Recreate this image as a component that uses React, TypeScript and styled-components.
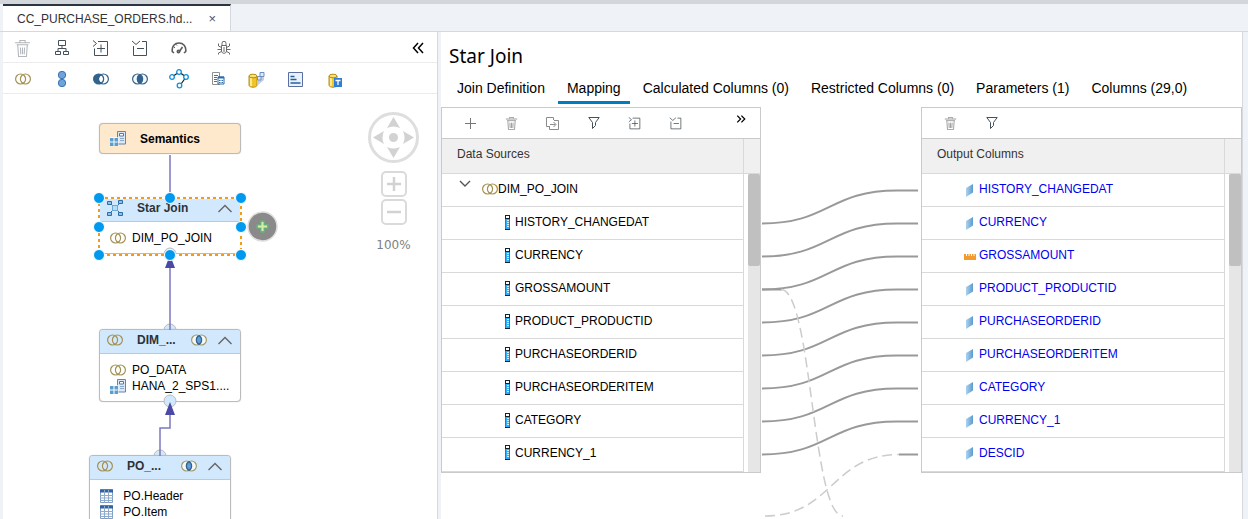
import React from "react";
import styled, { createGlobalStyle } from "styled-components";

const GlobalStyle = createGlobalStyle`
  *, *::before, *::after { box-sizing: border-box; }
  body {
    margin: 0;
    background: #eff3f8;
    color: #000;
    font: 12px/16px "Liberation Sans", Arial, sans-serif;
  }
  button {
    margin: 0;
    padding: 0;
    border: 0;
    background: none;
    color: inherit;
    font: inherit;
    cursor: pointer;
  }
  svg { display: block; flex: none; }
`;

/* ---------- Page frame ---------- */

const Page = styled.div`
  display: flex;
  flex-direction: column;
  height: 100vh;
  overflow: hidden;
  border-top: 4px solid #d3d7dc;
`;

const FileTabs = styled.div`
  display: flex;
  flex: none;
  height: 28px;
  padding-left: 3px;
  border-bottom: 1px solid #d5d8de;
`;

const FileTab = styled.div`
  display: flex;
  align-items: center;
  gap: 13px;
  padding: 0 11px 0 14px;
  border-top: 2px solid #2b3442;
  border-right: 1px solid #d5d8de;
  background: #fff;
  color: #333;
`;

const CloseButton = styled.button`
  width: 14px;
  height: 16px;
  color: #555;
  font-size: 13px;
`;

const Workspace = styled.div`
  display: flex;
  flex: 1;
  gap: 3px;
  min-height: 0;
  padding: 0 5px 0 3px;
`;

const ScenarioPane = styled.section`
  display: flex;
  flex: none;
  flex-direction: column;
  width: 435px;
  border-right: 1px solid #d5d8de;
  background: #fff;
`;

const DetailPane = styled.section`
  display: flex;
  flex: 1;
  flex-direction: column;
  min-width: 0;
  border-right: 1px solid #d5d8de;
  background: #fff;
`;

/* ---------- Toolbars ---------- */

const Toolbar = styled.div`
  display: flex;
  flex: none;
  height: 31px;
  padding-top: 2px;
  border-bottom: 1px solid #ececee;
`;

const ToolButton = styled.button<{ $before?: string; $wide?: boolean; $raised?: boolean }>`
  display: flex;
  align-items: center;
  justify-content: center;
  width: ${(p) => (p.$wide ? 41 : 39)}px;
  margin-left: ${(p) => p.$before ?? "0"};
  padding-bottom: ${(p) => (p.$raised ? 8 : 0)}px;
`;

/* ---------- Diagram ---------- */

const Canvas = styled.div`
  position: relative;
  flex: 1;
  overflow: hidden;
`;

const CanvasLayer = styled.svg`
  position: absolute;
  top: 0;
  left: 0;
  pointer-events: none;
`;

const Node = styled.article<{ $x: number; $y: number; $fill?: string }>`
  position: absolute;
  left: ${(p) => p.$x}px;
  top: ${(p) => p.$y}px;
  width: 142px;
  border: 1px solid #b9bbbd;
  border-radius: 4px;
  box-shadow: 0 0 1px #b9bbbd;
  background: ${(p) => p.$fill ?? "#fff"};
  overflow: hidden;
`;

const NodeHeader = styled.header<{ $plain?: boolean }>`
  display: flex;
  align-items: center;
  height: ${(p) => (p.$plain ? 29 : 24)}px;
  padding: ${(p) => (p.$plain ? "0 8px 0 10px" : "0 8px 3px 7px")};
  border-bottom: ${(p) => (p.$plain ? "0" : "1px solid #c3c8cc")};
  background: ${(p) => (p.$plain ? "transparent" : "#d2e8fc")};
`;

const NodeTitle = styled.h3<{ $dark?: boolean }>`
  flex: 1;
  margin: 0;
  padding-left: 14px;
  color: ${(p) => (p.$dark ? "#000" : "#2c3238")};
  font-size: 12px;
  line-height: 16px;
`;

const CollapseButton = styled.button`
  margin-left: 11px;
`;

const NodeInputs = styled.ul`
  margin: 0;
  padding: 8px 0 7px 10px;
  list-style: none;
`;

const NodeInput = styled.li`
  display: flex;
  align-items: center;
  gap: 6px;
  height: 16px;
`;

const AddButton = styled.button`
  position: absolute;
  left: 244px;
  top: 117px;
`;

const Navigator = styled.div`
  position: absolute;
  top: 18px;
  right: 18px;
  display: flex;
  flex-direction: column;
  align-items: center;
`;

const ZoomButtons = styled.div`
  display: flex;
  flex-direction: column;
  gap: 2px;
  margin: 8px 0 12px;
`;

const ZoomLevel = styled.span`
  color: #808080;
  font-family: "DejaVu Sans", Verdana, sans-serif;
`;

/* ---------- Detail pane ---------- */

const PaneTitle = styled.h1`
  margin: 0;
  padding: 11px 8px 0;
  font: 400 19px/26px "Noto Sans", "Segoe UI", sans-serif;
`;

const ViewTabs = styled.nav`
  display: flex;
  flex: none;
  gap: 4px;
  margin-bottom: 3px;
  padding: 4px 7px 0;
`;

const ViewTab = styled.button<{ $active?: boolean }>`
  height: 31px;
  padding: 2px 9px 0;
  border-bottom: 3px solid ${(p) => (p.$active ? "#007cc0" : "transparent")};
  font-size: 14px;
  line-height: 16px;
  white-space: nowrap;
`;

const MappingArea = styled.div`
  display: grid;
  grid-template-columns: minmax(0, 320fr) 160px minmax(0, 321fr);
  align-items: start;
  flex: 1;
  min-height: 0;
`;

const Panel = styled.section`
  border: 1px solid #c9cacb;
`;

const PanelToolbar = styled.div`
  display: flex;
  height: 31px;
  padding-left: 8px;
  border-bottom: 1px solid #c9cacb;
`;

const PanelBody = styled.div`
  display: flex;
`;

const ColumnTable = styled.table`
  flex: 1;
  min-width: 0;
  border-collapse: separate;
  border-spacing: 0;
`;

const HeadCell = styled.th`
  height: 35px;
  padding: 0 15px 4px;
  border-bottom: 1px solid #d9d9d9;
  background: #f0f0f0;
  color: #333;
  font-weight: 400;
  text-align: left;
`;

const Cell = styled.td<{ $indent: number }>`
  height: 33px;
  padding: 0 0 2px ${(p) => p.$indent}px;
  border-bottom: 1px solid #d9d9d9;
  tr:last-child > & {
    height: 34px;
    padding-bottom: 4px;
  }
`;

const CellContent = styled.div<{ $gap: number }>`
  display: flex;
  align-items: center;
  gap: ${(p) => p.$gap}px;
`;

const Twisty = styled.button`
  padding-bottom: 10px;
  margin-right: 11px;
`;

const ColumnLink = styled.a`
  color: #0000f0;
  text-decoration: none;
`;

const Gutter = styled.div`
  display: flex;
  flex: none;
  flex-direction: column;
  width: 17px;
  border-left: 1px solid #d9d9d9;
`;

const GutterHead = styled.div`
  height: 35px;
  border-bottom: 1px solid #d9d9d9;
  background: #f0f0f0;
`;

const ScrollTrack = styled.div`
  flex: 1;
  margin-left: 4px;
  background: #e6e6e6;
`;

const ScrollThumb = styled.div`
  height: 92px;
  border-radius: 2px;
  background: #c0c0c0;
`;

const Wires = styled.svg`
  width: 100%;
  height: 412px;
`;

/* ---------- Icons ---------- */

const TrashIcon = ({ size = 16, color = "#8b8b8b" }) => (
  <svg width={size} height={size} viewBox="0 0 16 16" fill="none" stroke={color}>
    <path d="M1 2.5h14M5.5 2V.5h5V2M2.5 4.5h11M3.5 5l.8 10.5h7.4L12.500 5M6 7l.4 6.500M8 7v6.500M10 7l-.4 6.500" />
  </svg>
);

const HierarchyIcon = () => (
  <svg width="16" height="16" viewBox="0 0 16 16" fill="none" stroke="#44505a">
    <path d="M4.500.500h7v5h-7zM1.500 11.500h5v3h-5zM9.500 11.500h5v3h-5zM8 5.500v3M4 11.500v-3h8v3" />
  </svg>
);

const ExpandIcon = ({ size = 17, color = "#44505a" }) => (
  <svg width={size} height={size} viewBox="0 0 17 17" fill="none" stroke={color}>
    <path d="M6 1.500h9.500v14h-13V8.500M9 4.500v8M5 8.500h8M1 .5l3.500 3L1 6.500" />
  </svg>
);

const CollapseIcon = ({ size = 17, color = "#44505a" }) => (
  <svg width={size} height={size} viewBox="0 0 17 17" fill="none" stroke={color}>
    <path d="M11 1.500h4.500v14h-13V6M6 8.500h7M1 1l4 3.500L9 1" />
  </svg>
);

const GaugeIcon = () => (
  <svg width="16" height="14" viewBox="0 0 16 14" fill="none" stroke="#5b5b5b" strokeWidth="1.600">
    <path d="M3 12L1.300 10.500C.5 5 4 2 8 2s7.500 3 6.700 8.500L13 12M8 11l3.500-5" />
    <circle cx="7.500" cy="10.500" r="1.200" />
    <path d="M3 6l1 .8M5.500 3.500l.5 1" strokeWidth="1" />
  </svg>
);

const BugIcon = () => (
  <svg width="14" height="14" viewBox="0 0 14 14" fill="none" stroke="#6b6b6b">
    <path d="M5 4.500V2.300a2 2 0 014 0v2.200M4.500 4.500h5v5.500c0 3-5 3-5 0zM7 6v5M4.500 6.500L1.500 5V2.500M4.500 8.500H.5M4.500 10.500L1.500 12v1.500M9.500 6.500l3-1.500V2.500M9.500 8.500h4M9.500 10.500l3 1.500v1.500" />
  </svg>
);

const DoubleChevron = ({ left = false, size = 12 }) => (
  <svg width={size} height={size} viewBox="0 0 12 12" fill="none" stroke="#000" strokeWidth="1.500">
    <path d={left ? "M6 1L1.500 6 6 11M11 1L6.500 6l4.500 5" : "M1.500 2l4 4-4 4M6.500 2l4 4-4 4"} />
  </svg>
);

const JoinIcon = () => (
  <svg width="16" height="12" viewBox="0 0 16 12" fill="none" stroke="#a39153" strokeWidth="1.200">
    <circle cx="5.600" cy="6" r="5" />
    <circle cx="10.400" cy="6" r="5" />
  </svg>
);

const UnionIcon = () => (
  <svg width="10" height="18" viewBox="0 0 10 18" fill="#6ea3dc" stroke="#3c73b0">
    <circle cx="5" cy="5" r="3.700" />
    <circle cx="5" cy="13" r="3.700" />
  </svg>
);

const MinusIcon = () => (
  <svg width="16" height="12" viewBox="0 0 16 12" stroke="#33628c" strokeWidth="1.200">
    <circle cx="10.400" cy="6" r="5" fill="#fff" />
    <path d="M5.600 1a5 5 0 100 10 5 5 0 002.400-.600A5 5 0 018 1.600 5 5 0 005.600 1z" fill="#33628c" />
    <path d="M8 1.600a5 5 0 010 8.800" fill="none" />
  </svg>
);

const IntersectIcon = ({ edge = "#33628c", fill = "#33628c" }) => (
  <svg width="16" height="12" viewBox="0 0 16 12" stroke={edge} strokeWidth="1.200">
    <circle cx="5.600" cy="6" r="5" fill="#f4f8fb" />
    <circle cx="10.400" cy="6" r="5" fill="#f4f8fb" />
    <path d="M8 1.600a5 5 0 010 8.800 5 5 0 010-8.800z" fill={fill} stroke="#33628c" />
  </svg>
);

const GraphIcon = () => (
  <svg width="20" height="20" viewBox="0 0 20 20" fill="#fff" stroke="#1090d8" strokeWidth="1.300">
    <path d="M3 8l7-5 7 5-6 8.500" stroke="#222" fill="none" />
    <circle cx="3" cy="8" r="2.300" />
    <circle cx="10" cy="3" r="2.300" />
    <circle cx="17" cy="8" r="2.300" />
    <circle cx="10.500" cy="16.500" r="2.300" />
  </svg>
);

const ReportIcon = () => (
  <svg width="14" height="14" viewBox="0 0 14 14" fill="none">
    <path d="M1.500.500h7v12h-7z" fill="#fff" stroke="#8d9291" />
    <path d="M3 3.500h4M3 5.500h3M3 7.500h3M3 9.500h3" stroke="#3b73aa" />
    <path d="M7 5h6v7H7z" fill="#fff" stroke="#2f6ca8" />
    <path d="M7 5.500h6" stroke="#2f6ca8" strokeWidth="2" />
    <path d="M8 8.500h1.500M8 10.500h1.500M10.500 8.500H12M10.500 10.500H12" stroke="#2f6ca8" />
  </svg>
);

const CylinderIcon = ({ children, width = 18 }: { children: React.ReactNode; width?: number }) => (
  <svg width={width} height="17" viewBox={`0 0 ${width} 17`}>
    <path d="M1 5v9c0 3 8 3 8 0V5z" fill="#f0c52a" stroke="#b88d12" />
    <path d="M3 7v8" stroke="#fff6b5" strokeWidth="1.500" />
    <ellipse cx="5" cy="5" rx="4" ry="1.800" fill="#f9e272" stroke="#b88d12" />
    {children}
  </svg>
);

const CubeDbIcon = () => (
  <CylinderIcon>
    <path d="M9 7l7-5v7l-6 5z" fill="#c3cfdf" />
    <path d="M12 1.500h4v4h-4zM9.500 5.500h3.500v3.500H9.500z" fill="#dfe9f6" stroke="#6a8fc0" />
  </CylinderIcon>
);

const TableDbIcon = () => (
  <CylinderIcon width={14}>
    <path d="M6 7h8v9H6z" fill="#2f7fd6" />
    <path d="M7.500 9.500h5M10 9.500V14" stroke="#fff" strokeWidth="1.300" />
  </CylinderIcon>
);

const RankIcon = () => (
  <svg width="15" height="15" viewBox="0 0 15 15">
    <path d="M.5.5h14v14H.5z" fill="#eaf1fa" stroke="#5a6ea0" />
    <path d="M2.500 4.500h4M2.500 7.500h6M2.500 11h10" stroke="#2460a0" strokeWidth="1.600" />
  </svg>
);

const CalcViewIcon = () => (
  <svg width="16" height="15" viewBox="0 0 16 15">
    <path d="M7.500.5h8v12.500h-8z" fill="#dbe8f7" stroke="#6484ad" />
    <path d="M9.500 2.500h4v2.500h-4z" fill="#fff" stroke="#55779f" />
    <path d="M10.500 7.500h1M12.500 7.500h1M10.500 9.500h1M12.500 9.500h1" stroke="#40648f" />
    <path d="M0 6h8.500v9H0z" fill="#fff" fillOpacity=".7" />
    <path d="M0 7h3.500v3.500H0zM4.500 7H8v3.500H4.500zM0 11.500h3.500V15H0zM4.500 11.500H8V15H4.500z" fill="#5a9fd0" />
  </svg>
);

const StarJoinIcon = () => (
  <svg width="16" height="16" viewBox="0 0 16 16" fill="#8fc1e8" stroke="#2b6fa8">
    <path d="M3 3l10 10M13 3L3 13" />
    <path d="M5.500 5.500h5v5h-5z" fill="#b9dcf5" stroke="#6aa8d8" />
    <path d="M.5 1.500h4v3h-4zM11.500.5h4v3h-4zM.5 12.500h4v3h-4zM11.500 12.500h4v3h-4z" />
  </svg>
);

const TableIcon = () => (
  <svg width="14" height="14" viewBox="1 0 14 14" fill="none">
    <path d="M1.500.5h12v13h-12z" fill="#fff" stroke="#7f9cc0" />
    <path d="M1 2h13" stroke="#2f63a5" strokeWidth="3" />
    <path d="M5.500 1v13M9.500 1v13M1 6.500h13M1 9h13M1 11.500h13" stroke="#8fabcc" />
  </svg>
);

const CaretUp = () => (
  <svg width="14" height="9" viewBox="0 0 14 9" fill="none" stroke="#666" strokeWidth="1.400">
    <path d="M.5 8L7 1.500 13.500 8" />
  </svg>
);

const PlusIcon = () => (
  <svg width="11" height="11" viewBox="0 0 11 11" stroke="#777">
    <path d="M5.500 0v11M0 5.500h11" />
  </svg>
);

const CopyIcon = () => (
  <svg width="13" height="13" viewBox="0 0 13 13" fill="none" stroke="#8b8b8b">
    <path d="M3 9.500H.5v-9h7V3M3.500 9v3.500h9v-9H8M4 7.500h5.500M7.500 5l2.500 2.500L7.500 10" />
  </svg>
);

const FilterIcon = () => (
  <svg width="12" height="12" viewBox="0 0 12 12" fill="none" stroke="#44505a">
    <path d="M.8.5h10.400L7.500 5.500v3l-3 3v-6z" />
  </svg>
);

const AttributeIcon = () => (
  <svg width="5" height="15" viewBox="0 0 5 15">
    <path d="M0 0h5v15H0z" fill="#123" />
    <path d="M1 1h3v2H1z" fill="#fff" />
    <path d="M0 4h5v10H0z" fill="#1583cc" />
    <path d="M1 4h3v10H1z" fill="#2fb0fa" />
    <path d="M2 5.500h2M2 7.500h2M2 9.500h2M2 11.500h2" stroke="#d5efff" />
  </svg>
);

const DimensionIcon = () => (
  <svg width="12" height="15" viewBox="0 0 12 15">
    <defs>
      <linearGradient id="slab">
        <stop offset="0" stopColor="#add3ef" />
        <stop offset="1" stopColor="#5b9bd0" />
      </linearGradient>
    </defs>
    <path d="M2 6L9 2v8.500L2 15z" fill="url(#slab)" />
  </svg>
);

const MeasureIcon = () => (
  <svg width="12" height="15" viewBox="0 0 12 15">
    <path d="M0 6h12v6H0z" fill="#f29a2e" />
    <path d="M2.500 6v2M5 6v2M7.500 6v2M10 6v2" stroke="#fff" />
  </svg>
);

/* ---------- Data ---------- */

const modelTools: [string, React.ReactNode][] = [
  ["Delete", <TrashIcon color="#b3b6bb" size={17} />],
  ["Auto layout", <HierarchyIcon />],
  ["Expand all", <ExpandIcon />],
  ["Collapse all", <CollapseIcon />],
  ["Performance analysis", <GaugeIcon />],
  ["Debug", <BugIcon />],
];

const nodeTools: [string, React.ReactNode][] = [
  ["Join", <JoinIcon />],
  ["Union", <UnionIcon />],
  ["Minus", <MinusIcon />],
  ["Intersect", <IntersectIcon />],
  ["Graph", <GraphIcon />],
  ["Projection", <ReportIcon />],
  ["Aggregation", <CubeDbIcon />],
  ["Rank", <RankIcon />],
  ["Table function", <TableDbIcon />],
];

const sourceTools: [string, React.ReactNode][] = [
  ["Add", <PlusIcon />],
  ["Remove", <TrashIcon size={13} />],
  ["Copy", <CopyIcon />],
  ["Filter", <FilterIcon />],
  ["Expand", <ExpandIcon size={13} />],
  ["Collapse", <CollapseIcon size={13} />],
];

const outputTools = [sourceTools[1], sourceTools[3]];

const views = [
  "Join Definition",
  "Mapping",
  "Calculated Columns (0)",
  "Restricted Columns (0)",
  "Parameters (1)",
  "Columns (29,0)",
];

const sourceColumns = [
  "HISTORY_CHANGEDAT",
  "CURRENCY",
  "GROSSAMOUNT",
  "PRODUCT_PRODUCTID",
  "PURCHASEORDERID",
  "PURCHASEORDERITEM",
  "CATEGORY",
  "CURRENCY_1",
];

const outputColumns = [...sourceColumns, "DESCID"];

const handles = [
  [96, 104], [167, 104], [238, 104],
  [96, 133], [238, 133],
  [96, 161], [167, 161], [238, 161],
];

/* ---------- Parts ---------- */

const DiagramNode = ({
  x, y, title, icon, join, children,
}: {
  x: number; y: number; title: string; icon: React.ReactNode; join?: boolean; children: React.ReactNode;
}) => (
  <Node $x={x} $y={y}>
    <NodeHeader>
      {icon}
      <NodeTitle>{title}</NodeTitle>
      {join && <IntersectIcon edge="#a39a6a" fill="#5d9fdc" />}
      <CollapseButton aria-label={`Collapse ${title}`}><CaretUp /></CollapseButton>
    </NodeHeader>
    <NodeInputs>{children}</NodeInputs>
  </Node>
);

const Scrollbar = () => (
  <Gutter>
    <GutterHead />
    <ScrollTrack><ScrollThumb /></ScrollTrack>
  </Gutter>
);

const Scenario = () => (
  <Canvas>
    <CanvasLayer width="434" height="425" fill="#d2e8fc" stroke="#b9bbbd">
      <circle cx="167" cy="236" r="6" />
      <circle cx="157" cy="362" r="6" />
    </CanvasLayer>
    <Node $x={96} $y={29} $fill="#ffe9cc">
      <NodeHeader $plain>
        <CalcViewIcon />
        <NodeTitle $dark>Semantics</NodeTitle>
      </NodeHeader>
    </Node>
    <DiagramNode x={96} y={103} title="Star Join" icon={<StarJoinIcon />}>
      <NodeInput><JoinIcon />DIM_PO_JOIN</NodeInput>
    </DiagramNode>
    <DiagramNode x={96} y={235} title="DIM_..." icon={<JoinIcon />} join>
      <NodeInput><JoinIcon />PO_DATA</NodeInput>
      <NodeInput><CalcViewIcon />HANA_2_SPS1....</NodeInput>
    </DiagramNode>
    <DiagramNode x={86} y={361} title="PO_..." icon={<JoinIcon />} join>
      <NodeInput><TableIcon />&nbsp;PO.Header</NodeInput>
      <NodeInput><TableIcon />&nbsp;PO.Item</NodeInput>
    </DiagramNode>
    <CanvasLayer width="434" height="425" fill="none">
      <g fill="#d2e8fc" stroke="#b9bbbd">
        <circle cx="167" cy="160" r="6" />
        <circle cx="167" cy="307" r="6" />
      </g>
      <path d="M167 61v43M167 174v62M167 320v14h-10v28" stroke="#7b78bd" strokeWidth="1.500" />
      <path d="M167 161l5 13h-10zM167 308l5 13h-10z" fill="#4b49a6" />
      <path d="M96 104h142v57H96z" stroke="#fff" strokeWidth="2" />
      <path d="M96 104h142v57H96z" stroke="#f59a16" strokeWidth="2" strokeDasharray="3 3" />
      <g fill="#0099f0" stroke="#fff">
        {handles.map(([cx, cy]) => <circle key={`${cx}-${cy}`} cx={cx} cy={cy} r="5.500" />)}
      </g>
    </CanvasLayer>
    <AddButton aria-label="Add node">
      <svg width="31" height="31" viewBox="0 0 31 31">
        <circle cx="15.500" cy="15.500" r="14.500" fill="#8a8a8a" stroke="#dedede" strokeWidth="1.500" />
        <path d="M15.500 9.500v12M9.500 15.500h12" stroke="#5bbf7c" strokeWidth="4" />
        <path d="M15.500 11v9M11 15.500h9" stroke="#d6efa6" strokeWidth="2" />
      </svg>
    </AddButton>
    <Navigator>
      <svg width="51" height="51" viewBox="0 0 51 51" fill="#d2d2d2">
        <circle cx="25.500" cy="25.500" r="24" fill="#fff" stroke="#dedede" strokeWidth="3" />
        <circle cx="25.500" cy="25.500" r="4.500" />
        <path d="M25.500 5l6.500 11q-6.500-3-13 0zM25.500 46l6.500-11q-6.500 3-13 0zM5 25.500l11-6.500q-3 6.500 0 13zM46 25.500l-11-6.500q3 6.500 0 13z" />
      </svg>
      <ZoomButtons>
        {["Zoom in", "Zoom out"].map((label, i) => (
          <button key={label} aria-label={label}>
            <svg width="26" height="26" viewBox="0 0 26 26" fill="#fff" stroke="#dadada" strokeWidth="2">
              <rect x="1" y="1" width="24" height="24" rx="4" />
              <path d={i === 0 ? "M6 13h14M13 6v14" : "M6 13h14"} stroke="#d2d2d2" strokeWidth="2.500" />
            </svg>
          </button>
        ))}
      </ZoomButtons>
      <ZoomLevel>100%</ZoomLevel>
    </Navigator>
  </Canvas>
);

const SourcePanel = () => (
  <Panel>
    <PanelToolbar>
      {sourceTools.map(([label, icon]) => (
        <ToolButton key={label} aria-label={label} $wide>{icon}</ToolButton>
      ))}
      <ToolButton aria-label="More" $before="auto" $raised><DoubleChevron size={10} /></ToolButton>
    </PanelToolbar>
    <PanelBody>
      <ColumnTable>
        <thead>
          <tr><HeadCell scope="col">Data Sources</HeadCell></tr>
        </thead>
        <tbody>
          <tr>
            <Cell $indent={17}>
              <CellContent $gap={0}>
                <Twisty aria-label="Collapse DIM_PO_JOIN">
                  <svg width="12" height="8" viewBox="0 0 12 8" fill="none" stroke="#555" strokeWidth="1.400">
                    <path d="M1 1l5 5 5-5" />
                  </svg>
                </Twisty>
                <JoinIcon />
                DIM_PO_JOIN
              </CellContent>
            </Cell>
          </tr>
          {sourceColumns.map((name) => (
            <tr key={name}>
              <Cell $indent={63}>
                <CellContent $gap={5}><AttributeIcon />{name}</CellContent>
              </Cell>
            </tr>
          ))}
        </tbody>
      </ColumnTable>
      <Scrollbar />
    </PanelBody>
  </Panel>
);

const MappingWires = () => (
  <Wires viewBox="0 0 160 412" preserveAspectRatio="none" fill="none" stroke="#999" strokeWidth="2">
    {sourceColumns.map((name, i) => {
      const y = 116.5 + i * 33;
      return <path key={name} d={`M1 ${y}C68 ${y} 68 ${y - 33} 136 ${y - 33}H157`} />;
    })}
    <path d="M1 182.500h20M138 347.500h19" />
    <g stroke="#ccc" strokeWidth="1.500" strokeDasharray="10 5">
      <path d="M20 182.500C51 182.500 51 409 82 409" />
      <path d="M4 409C71 409 71 347.500 138 347.500" />
    </g>
  </Wires>
);

const OutputPanel = () => (
  <Panel>
    <PanelToolbar>
      {outputTools.map(([label, icon]) => (
        <ToolButton key={label} aria-label={label} $wide>{icon}</ToolButton>
      ))}
    </PanelToolbar>
    <PanelBody>
      <ColumnTable>
        <thead>
          <tr><HeadCell scope="col">Output Columns</HeadCell></tr>
        </thead>
        <tbody>
          {outputColumns.map((name) => (
            <tr key={name}>
              <Cell $indent={42}>
                <CellContent $gap={3}>
                  {name === "GROSSAMOUNT" ? <MeasureIcon /> : <DimensionIcon />}
                  <ColumnLink href={`#${name}`}>{name}</ColumnLink>
                </CellContent>
              </Cell>
            </tr>
          ))}
        </tbody>
      </ColumnTable>
      <Scrollbar />
    </PanelBody>
  </Panel>
);

export default function App() {
  return (
    <>
      <GlobalStyle />
      <Page>
        <FileTabs>
          <FileTab>
            CC_PURCHASE_ORDERS.hd...
            <CloseButton aria-label="Close file">×</CloseButton>
          </FileTab>
        </FileTabs>
        <Workspace>
          <ScenarioPane>
            <Toolbar>
              {modelTools.map(([label, icon]) => (
                <ToolButton key={label} aria-label={label} $before={label === "Debug" ? "6px" : "0"}>
                  {icon}
                </ToolButton>
              ))}
              <ToolButton aria-label="Hide details" $before="auto"><DoubleChevron left /></ToolButton>
            </Toolbar>
            <Toolbar>
              {nodeTools.map(([label, icon]) => (
                <ToolButton key={label} aria-label={label}>{icon}</ToolButton>
              ))}
            </Toolbar>
            <Scenario />
          </ScenarioPane>
          <DetailPane>
            <PaneTitle>Star Join</PaneTitle>
            <ViewTabs>
              {views.map((view) => (
                <ViewTab key={view} $active={view === "Mapping"}>{view}</ViewTab>
              ))}
            </ViewTabs>
            <MappingArea>
              <SourcePanel />
              <MappingWires />
              <OutputPanel />
            </MappingArea>
          </DetailPane>
        </Workspace>
      </Page>
    </>
  );
}
